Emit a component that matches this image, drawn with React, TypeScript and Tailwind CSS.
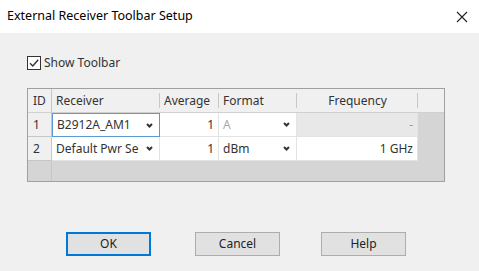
import React from "react";

const font = { fontFamily: '"Noto Sans", "Open Sans", sans-serif' };

function Chevron() {
  return (
    <svg width="7" height="5" viewBox="0 0 7 5" className="shrink-0">
      <path d="M1 1 L3.5 3.5 L6 1" fill="none" stroke="#333" strokeWidth="2" />
    </svg>
  );
}

function HeaderCell({ label, center, sep = true }: { label: string; center?: boolean; sep?: boolean }) {
  return (
    <div className="relative flex items-center h-full px-1">
      <span className={center ? "w-full text-center" : ""}>{label}</span>
      {sep && <div className="absolute right-0 top-[4px] bottom-[4px] w-px bg-[#c8c8c8]" />}
    </div>
  );
}

function ComboCell({ text, focus, muted }: { text: string; focus?: boolean; muted?: boolean }) {
  return (
    <div
      className={
        "flex items-center justify-between bg-white pl-[4px] pr-[6px] h-full " +
        (focus ? "border border-[#5b9bd5]" : "border-r border-b border-[#e3e3e3]")
      }
    >
      <span className={muted ? "text-[#a8a8a8]" : "text-[#333]"}>{text}</span>
      <Chevron />
    </div>
  );
}

function NumCell({ text, gray }: { text: string; gray?: boolean }) {
  return (
    <div
      className={
        "flex items-center justify-end pr-[4px] h-full border-r border-b border-[#e3e3e3] " +
        (gray ? "bg-[#e8e8e8] text-[#999]" : "bg-white text-[#333]")
      }
    >
      {text}
    </div>
  );
}

function IdCell({ n }: { n: string }) {
  return (
    <div className="flex items-center pl-[5px] h-full bg-[#f0f0f0] border-r border-b border-[#c6c6c6]">{n}</div>
  );
}

function Btn({ label, primary, className = "" }: { label: string; primary?: boolean; className?: string }) {
  return (
    <div
      className={
        "w-[85px] h-[24px] flex items-center justify-center bg-[#e1e1e1] text-[#222] " +
        (primary ? "border-2 border-[#0078d7] " : "border border-[#adadad] ") +
        className
      }
    >
      {label}
    </div>
  );
}

export default function App() {
  return (
    <div className="w-[479px] h-[271px] bg-[#f0f0f0] text-[12px] text-[#333] flex flex-col overflow-hidden" style={font}>
      <div className="h-[33px] bg-white flex items-center justify-between pl-[7px] pr-[11px]">
        <span className="text-[12.5px] text-black">External Receiver Toolbar Setup</span>
        <svg width="12" height="12" viewBox="0 0 12 12">
          <path d="M1 1 L11 11 M11 1 L1 11" stroke="#222" strokeWidth="1.1" />
        </svg>
      </div>

      <div className="flex items-center gap-[3px] pl-[27px] mt-[23px] h-[14px]">
        <div className="w-[14px] h-[14px] border border-[#333] bg-white flex items-center justify-center">
          <svg width="12" height="12" viewBox="0 0 12 12">
            <path d="M2 6.2 L4.8 9 L10.2 2.8" fill="none" stroke="#333" strokeWidth="1.4" />
          </svg>
        </div>
        <span>Show Toolbar</span>
      </div>

      <div className="ml-[27px] mt-[18px] w-[418px] h-[94px] border border-[#a0a0a0] bg-[#d5d5d5] flex flex-col">
        <div className="grid grid-cols-[24px_108px_59px_78px_121px_1fr] h-[24px] bg-[#f0f0f0] border-b border-[#d0d0d0]">
          <div className="flex items-center pl-[5px] border-r border-[#c6c6c6]">ID</div>
          <HeaderCell label="Receiver" />
          <HeaderCell label="Average" />
          <HeaderCell label="Format" />
          <HeaderCell label="Frequency" center />
          <div />
        </div>
        <div className="grid grid-cols-[24px_108px_59px_78px_121px_1fr] h-[24px]">
          <IdCell n="1" />
          <ComboCell text="B2912A_AM1" focus />
          <NumCell text="1" />
          <ComboCell text="A" muted />
          <NumCell text="-" gray />
          <div />
        </div>
        <div className="grid grid-cols-[24px_108px_59px_78px_121px_1fr] h-[24px]">
          <IdCell n="2" />
          <ComboCell text="Default Pwr Se" />
          <NumCell text="1" />
          <ComboCell text="dBm" />
          <NumCell text="1 GHz" />
          <div />
        </div>
        <div className="grid grid-cols-[24px_1fr] flex-1">
          <div className="border-r border-[#c6c6c6]" />
          <div />
        </div>
      </div>

      <div className="flex pl-[66px] mt-[50px]">
        <Btn label="OK" primary />
        <Btn label="Cancel" className="ml-[44px]" />
        <Btn label="Help" className="ml-[41px]" />
      </div>
    </div>
  );
}
